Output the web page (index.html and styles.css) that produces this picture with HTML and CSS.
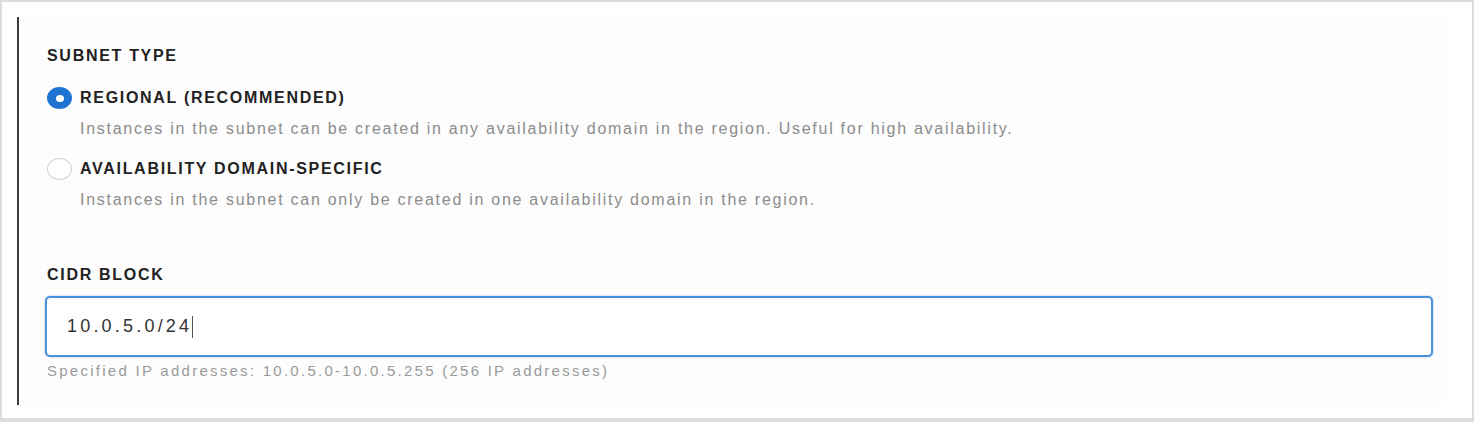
FILE: index.html
```html
<!DOCTYPE html>
<html lang="en">
<head>
  <meta charset="UTF-8">
  <meta name="viewport" content="width=device-width, initial-scale=1.0">
  <title>Create Subnet</title>
  <link rel="stylesheet" href="styles.css">
</head>
<body>

<div class="frame">
  <div class="panel">
    <div class="field-label">SUBNET TYPE</div>

    <label class="option option-first">
      <span class="radio checked"></span>
      <span class="option-title">REGIONAL (RECOMMENDED)</span>
    </label>
    <p class="option-desc">Instances in the subnet can be created in any availability domain in the region. Useful for high availability.</p>

    <label class="option">
      <span class="radio"></span>
      <span class="option-title">AVAILABILITY DOMAIN-SPECIFIC</span>
    </label>
    <p class="option-desc">Instances in the subnet can only be created in one availability domain in the region.</p>

    <div class="field-label cidr-label">CIDR BLOCK</div>
    <div class="text-input">
      <span class="value">10.0.5.0/24</span><span class="caret"></span>
    </div>
    <p class="helper">Specified IP addresses: 10.0.5.0-10.0.5.255 (256 IP addresses)</p>
  </div>
</div>

</body>
</html>
```

FILE: styles.css
```css
body {
  margin: 0;
  background-color: #dcdcdc;
  font-family: "Liberation Sans", Arial, sans-serif;
}

.frame {
  margin: 2px;
  height: 416px;
  background-color: #ffffff;
  padding: 15px 0 0 15px;
  box-sizing: border-box;
}

.panel {
  width: 1428px;
  height: 388px;
  border-left: 2px solid #3c3c3c;
  background-color: #fdfdfd;
  padding: 29px 0 0 28px;
  box-sizing: border-box;
}

.field-label {
  font-size: 16px;
  line-height: 20px;
  font-weight: bold;
  letter-spacing: 1.7px;
  color: #222222;
}

.option {
  display: flex;
  align-items: center;
  gap: 8px;
  height: 24px;
  margin-top: 9px;
}

.option-first {
  margin-top: 20px;
}

.radio {
  width: 25px;
  height: 22px;
  border-radius: 50%;
  border: 1px solid #d2d2d2;
  background-color: #ffffff;
  box-sizing: border-box;
  display: flex;
  align-items: center;
  justify-content: center;
}

.radio.checked {
  border: none;
  background-color: #1f74d3;
}

.radio.checked::after {
  content: "";
  width: 8px;
  height: 7px;
  border-radius: 50%;
  background-color: #ffffff;
}

.option-title {
  font-size: 16px;
  font-weight: bold;
  letter-spacing: 1.7px;
  color: #222222;
}

.option + .option-desc {
  margin: 9px 0 0 33px;
}

.option-desc {
  font-size: 16px;
  line-height: 20px;
  letter-spacing: 1.73px;
  color: #8c8c8c;
}

.option-desc + .option {
  margin-top: 18px;
}

.cidr-label {
  margin-top: 55px;
}

.text-input {
  margin: 11px 0 0 -2px;
  width: 1388px;
  height: 61px;
  border: 2px solid #4a8fdc;
  border-radius: 5px;
  box-shadow: 0 0 2px rgba(74, 143, 220, 0.6);
  background-color: #ffffff;
  box-sizing: border-box;
  padding-left: 20px;
  display: flex;
  align-items: center;
}

.value {
  font-size: 18px;
  letter-spacing: 3.2px;
  color: #333333;
}

.caret {
  width: 1px;
  height: 22px;
  background-color: #555555;
}

.helper {
  margin: 5px 0 0 0;
  font-size: 15px;
  line-height: 18px;
  letter-spacing: 2.26px;
  color: #9a9a9a;
}
```
